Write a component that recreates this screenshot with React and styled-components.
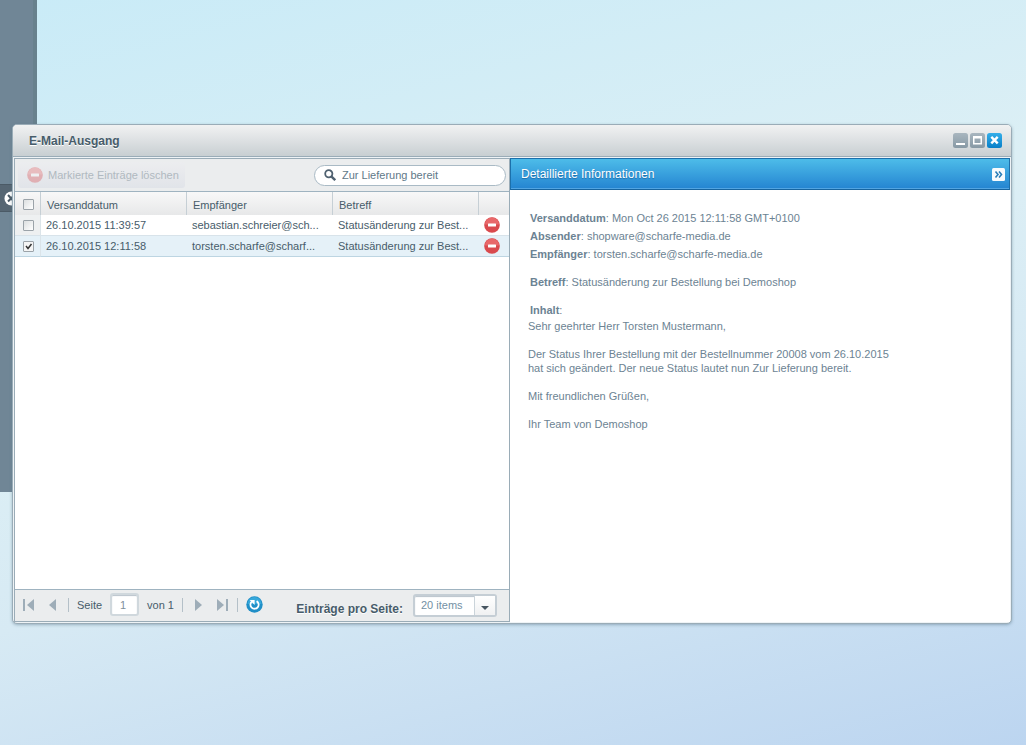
import React, { useState } from 'react'
import styled, { createGlobalStyle } from 'styled-components'

const GlobalStyle = createGlobalStyle`
  * {
    box-sizing: border-box;
  }

  body {
    margin: 0;
    color: #475c6a;
    font: 11px/14px 'Liberation Sans', Arial, sans-serif;
  }

  button, input, select {
    font: inherit;
    color: inherit;
  }
`

const Desktop = styled.main`
  position: relative;
  display: flex;
  height: 100vh;
  min-height: 480px;
  padding: 124px 14px 121px 12px;
  overflow: hidden;
  background: linear-gradient(165deg, #c9ebf7 0%, #dceff5 42%, #d7eaf4 62%, #bcd5f0 100%);
`

const BackWindow = styled.div`
  position: absolute;
  top: 0;
  left: 0;
  width: 37px;
  height: 492px;
  background: #708696;
  border-right: 4px solid #68818d;
`

const BackTab = styled.div`
  position: absolute;
  top: 184px;
  left: 0;
  width: 37px;
  height: 28px;
  padding: 6px 0 0 4px;
  background: #566673;
  border-top: 1px solid #4b5a66;
  border-bottom: 1px solid #4b5a66;
`

const Window = styled.section`
  position: relative;
  display: flex;
  flex: 1;
  flex-direction: column;
  min-width: 0;
  padding: 0 1px 1px;
  background: #eef3f6;
  border: 1px solid #9aacb7;
  border-radius: 5px;
  box-shadow: 0 1px 3px rgba(90, 120, 140, 0.5);
`

const TitleBar = styled.header`
  display: flex;
  flex: none;
  align-items: center;
  height: 32px;
  margin: 0 -1px 1px;
  padding: 0 9px 0 16px;
  background: linear-gradient(#f1f2f2, #dfe2e4 45%, #c8cfd2);
  border-bottom: 1px solid #9aacb7;
  border-radius: 4px 4px 0 0;
`

const Title = styled.h1`
  flex: 1;
  margin: 0;
  font-size: 12px;
  text-shadow: 0 1px 0 #fff;
`

const WindowTools = styled.div`
  display: flex;
  gap: 2px;
`

const IconButton = styled.button`
  display: flex;
  flex: none;
  padding: 0;
  background: none;
  border: 0;
`

const Panels = styled.div`
  display: grid;
  flex: 1;
  grid-template-columns: minmax(0, 124fr) minmax(0, 125fr);
  min-height: 0;
`

const ListPanel = styled.div`
  display: flex;
  flex-direction: column;
  min-width: 0;
  background: #fff;
  border: 1px solid #9aacb7;
`

const Toolbar = styled.div`
  display: flex;
  align-items: center;
  justify-content: space-between;
  height: 33px;
  padding: 0 3px;
  background: #ebedee;
  border-bottom: 1px solid #9fb3c0;
`

const DeleteButton = styled.button`
  display: flex;
  align-items: center;
  gap: 5px;
  height: 26px;
  padding: 0 6px 0 9px;
  color: #b0b9c0;
  background: linear-gradient(#ecedef, #e1e4e9);
  border: 0;
  border-radius: 3px;
`

const SearchBox = styled.label`
  display: flex;
  align-items: center;
  gap: 6px;
  width: 192px;
  height: 21px;
  padding: 0 9px;
  background: #fff;
  border: 1px solid #a9bac5;
  border-radius: 11px;
`

const SearchInput = styled.input`
  flex: 1;
  min-width: 0;
  padding: 0;
  color: #5f7888;
  background: none;
  border: 0;
  outline: 0;
`

const Table = styled.table`
  width: 100%;
  table-layout: fixed;
  border-collapse: separate;
  border-spacing: 0;
`

const CheckCol = styled.col`
  width: 26px;
`

const ActionCol = styled.col`
  width: 30px;
`

const HeadCell = styled.th`
  height: 23px;
  padding: 2px 6px 0;
  font-weight: normal;
  text-align: left;
  background: linear-gradient(#f8f8f8, #e7e8e9);
  border-right: ${({ $last }) => ($last ? '0' : '1px solid #c6cfd5')};
`

const Cell = styled.td`
  height: 21px;
  padding: 0 5px;
  white-space: nowrap;
  background: ${({ $selected }) => ($selected ? '#e5f1f8' : '#fff')};
  border-bottom: 1px solid ${({ $selected }) => ($selected ? '#bdd5e2' : '#d8e3ea')};
`

const CheckCell = styled(Cell)`
  padding: 0 0 0 8px;
  background: ${({ $selected }) => ($selected ? '#e5f1f8' : '#eef0f1')};
  border-right: 1px solid #dbe4e9;
`

const CheckHead = styled(HeadCell)`
  padding: 2px 0 0 8px;
`

const ActionCell = styled(Cell)`
  padding: 0 0 0 5px;
`

const Checkbox = styled.input`
  display: block;
  width: 11px;
  height: 11px;
  margin: 0;
  appearance: none;
  background: linear-gradient(135deg, #dcdfe0, #fff);
  border: 1px solid #9ba3a9;
  border-radius: 1px;

  &:checked {
    background: url("data:image/svg+xml,%3Csvg xmlns='http://www.w3.org/2000/svg' viewBox='0 0 9 9'%3E%3Cpath d='M2 4l2 2.5L7.5 2' fill='none' stroke='%23333' stroke-width='1.5'/%3E%3C/svg%3E") #f4f5f5;
  }
`

const Pager = styled.footer`
  display: flex;
  align-items: center;
  height: 32px;
  margin-top: auto;
  padding: 0 12px 0 7px;
  background: #ebedee;
  border-top: 1px solid #9fb3c0;
`

const PagerNav = styled.nav`
  display: flex;
  flex: 1;
  align-items: center;
  gap: 8px;
  padding-bottom: 2px;
`

const Arrows = styled.div`
  display: flex;
  gap: 12px;
`

const Separator = styled.span`
  width: 1px;
  height: 14px;
  background: #b4c0c8;
`

const PageField = styled.label`
  display: flex;
  align-items: center;
  gap: 8px;
`

const PageInput = styled.input`
  width: 29px;
  height: 23px;
  padding: 0 8px;
  color: #7e909c;
  background: #fff;
  border: 2px solid #d0d8dd;
  border-radius: 3px;
  box-shadow: inset 0 1px 1px #b8c3cb;
`

const SizeLabel = styled.label`
  margin: 7px 10px 0 0;
  font-size: 12px;
  font-weight: bold;
  white-space: nowrap;
  text-shadow: 0 1px 0 #fff;
`

const SelectBox = styled.div`
  position: relative;
  display: flex;
`

const Select = styled.select`
  width: 84px;
  height: 23px;
  padding: 0 24px 1px 6px;
  color: #7390a4;
  appearance: none;
  background: #fff;
  border: 2px solid #c5ced5;
  border-radius: 3px;
  box-shadow: inset 0 1px 1px #b8c3cb;
`

const SelectArrow = styled.span`
  position: absolute;
  top: 2px;
  right: 2px;
  bottom: 2px;
  display: flex;
  align-items: center;
  justify-content: center;
  width: 21px;
  padding-top: 5px;
  background: linear-gradient(#fff, #f0f1f2);
  border-left: 1px solid #cbd4da;
  pointer-events: none;
`

const DetailPanel = styled.aside`
  display: flex;
  flex-direction: column;
  min-width: 0;
  background: #fff;
`

const DetailHeader = styled.header`
  display: flex;
  align-items: center;
  justify-content: space-between;
  height: 32px;
  padding: 0 4px 0 10px;
  background: linear-gradient(#4dbce9, #2484d1);
  border: 1px solid #1c70ab;
  border-bottom-color: #18659f;
  box-shadow: inset 0 -1px 0 #52a5e2;
`

const DetailTitle = styled.h2`
  margin: 0;
  color: #fff;
  font-size: 12px;
  font-weight: normal;
  text-shadow: 0 1px 1px #1f6da8;
`

const Mail = styled.article`
  padding: 19px 18px;
  color: #6c8393;
`

const Meta = styled.dl`
  margin: 0;
  padding: 0 2px;
`

const MetaRow = styled.div`
  height: 18px;
  margin-top: ${({ $spaced }) => ($spaced ? '10px' : '0')};
  line-height: 18px;
`

const MetaName = styled.dt`
  display: inline;

  &::after {
    content: ': ';
    white-space: pre;
  }
`

const MetaValue = styled.dd`
  display: inline;
  margin: 0;
`

const Paragraph = styled.p`
  margin: 0 0 14px;
`

function MinusIcon({ faded }) {
  return (
    <svg width="16" height="16" viewBox="0 0 16 16" opacity={faded ? 0.35 : 1}>
      <circle cx="8" cy="8" r="7.8" fill="#d94a4e" />
      <path d="M1 7.5a7 7 0 0 1 14 0z" fill="#e8686a" />
      <rect x="4" y="6.5" width="8" height="3" rx="0.5" fill="#fff" />
    </svg>
  )
}

function SearchIcon() {
  return (
    <svg width="12" height="12" viewBox="0 0 12 12" fill="none" stroke="#4f6170">
      <circle cx="4.8" cy="4.8" r="3.6" strokeWidth="1.8" />
      <path d="M7.6 7.6l3.6 3.6" strokeWidth="2.4" />
    </svg>
  )
}

function ToolIcon({ type }) {
  return (
    <svg width="15" height="15" viewBox="0 0 15 15">
      <defs>
        <linearGradient id={`tool-${type}`} x2="0" y2="1">
          <stop stopColor={type === 'close' ? '#35aee9' : '#a9b6bf'} />
          <stop offset="1" stopColor={type === 'close' ? '#087fc8' : '#8799a5'} />
        </linearGradient>
      </defs>
      <rect width="15" height="15" rx="2.5" fill={`url(#tool-${type})`} />
      {type === 'minimize' && <path d="M3 11h9" stroke="#fff" strokeWidth="2" />}
      {type === 'maximize' && <path d="M3 3h9v8.5H3zM4.5 5.5v4.5h6V5.5z" fill="#fff" fillRule="evenodd" />}
      {type === 'close' && <path d="M4.3 3.8l6.4 6.6M10.7 3.8l-6.4 6.6" stroke="#fff" strokeWidth="2.4" />}
    </svg>
  )
}

function CollapseIcon() {
  return (
    <svg width="13" height="13" viewBox="0 0 13 13">
      <rect width="13" height="13" rx="1.5" fill="#f7fbfd" />
      <path d="M3.5 3.5L6 6.5l-2.5 3M7 3.5l2.5 3-2.5 3" fill="none" stroke="#2b7eb8" strokeWidth="1.6" />
    </svg>
  )
}

function PageArrow({ back, bar }) {
  return (
    <svg width="13" height="12" viewBox="0 0 13 12" fill="#9eadb8">
      <g transform={back ? 'translate(13 0) scale(-1 1)' : undefined}>
        <path d={bar ? 'M1 0v12l7-6z' : 'M4 0v12l7-6z'} />
        {bar && <rect x="10" width="2" height="12" />}
      </g>
    </svg>
  )
}

function RefreshIcon() {
  return (
    <svg width="17" height="17" viewBox="0 0 17 17">
      <circle cx="8.5" cy="8.5" r="8.2" fill="#208fc7" />
      <path d="M1.5 8a7 7 0 0 1 14 0z" fill="#36a8db" />
      <path d="M10.6 5.1a4.1 4.1 0 1 1-4.7.4" fill="none" stroke="#fff" strokeWidth="1.8" />
      <path d="M3.6 4h5v5z" fill="#fff" />
    </svg>
  )
}

const mails = [
  { id: 1, date: '26.10.2015 11:39:57', to: 'sebastian.schreier@scharfe-media.de', subject: 'Statusänderung zur Bestellung bei Demoshop' },
  { id: 2, date: '26.10.2015 12:11:58', to: 'torsten.scharfe@scharfe-media.de', subject: 'Statusänderung zur Bestellung bei Demoshop' }
]

const shorten = (text, length) => (text.length > length ? `${text.slice(0, length)}...` : text)

function MailTable() {
  const [selected, setSelected] = useState([2])

  const toggle = id =>
    setSelected(selected.includes(id) ? selected.filter(s => s !== id) : [...selected, id])

  return (
    <Table>
      <colgroup>
        <CheckCol />
        <col />
        <col />
        <col />
        <ActionCol />
      </colgroup>
      <thead>
        <tr>
          <CheckHead>
            <Checkbox
              type="checkbox"
              aria-label="Alle auswählen"
              checked={selected.length === mails.length}
              onChange={e => setSelected(e.target.checked ? mails.map(m => m.id) : [])}
            />
          </CheckHead>
          <HeadCell>Versanddatum</HeadCell>
          <HeadCell>Empfänger</HeadCell>
          <HeadCell>Betreff</HeadCell>
          <HeadCell $last />
        </tr>
      </thead>
      <tbody>
        {mails.map(mail => {
          const active = selected.includes(mail.id)
          return (
            <tr key={mail.id}>
              <CheckCell $selected={active}>
                <Checkbox type="checkbox" aria-label={mail.date} checked={active} onChange={() => toggle(mail.id)} />
              </CheckCell>
              <Cell $selected={active}>{mail.date}</Cell>
              <Cell $selected={active}>{shorten(mail.to, 22)}</Cell>
              <Cell $selected={active}>{shorten(mail.subject, 23)}</Cell>
              <ActionCell $selected={active}>
                <IconButton aria-label="Löschen"><MinusIcon /></IconButton>
              </ActionCell>
            </tr>
          )
        })}
      </tbody>
    </Table>
  )
}

function Paging() {
  return (
    <Pager>
      <PagerNav>
        <Arrows>
          <IconButton aria-label="Erste Seite"><PageArrow back bar /></IconButton>
          <IconButton aria-label="Vorherige Seite"><PageArrow back /></IconButton>
        </Arrows>
        <Separator />
        <PageField>
          Seite
          <PageInput defaultValue="1" />
        </PageField>
        <span>von 1</span>
        <Separator />
        <Arrows>
          <IconButton aria-label="Nächste Seite"><PageArrow /></IconButton>
          <IconButton aria-label="Letzte Seite"><PageArrow bar /></IconButton>
        </Arrows>
        <Separator />
        <IconButton aria-label="Aktualisieren"><RefreshIcon /></IconButton>
      </PagerNav>
      <SizeLabel htmlFor="page-size">Einträge pro Seite:</SizeLabel>
      <SelectBox>
        <Select id="page-size" defaultValue="20">
          <option value="20">20 items</option>
          <option value="40">40 items</option>
        </Select>
        <SelectArrow>
          <svg width="8" height="4" viewBox="0 0 8 4"><path d="M0 0h8L4 4z" fill="#475560" /></svg>
        </SelectArrow>
      </SelectBox>
    </Pager>
  )
}

function Details() {
  return (
    <DetailPanel>
      <DetailHeader>
        <DetailTitle>Detaillierte Informationen</DetailTitle>
        <IconButton aria-label="Einklappen"><CollapseIcon /></IconButton>
      </DetailHeader>
      <Mail>
        <Meta>
          <MetaRow>
            <MetaName><b>Versanddatum</b></MetaName>
            <MetaValue>Mon Oct 26 2015 12:11:58 GMT+0100</MetaValue>
          </MetaRow>
          <MetaRow>
            <MetaName><b>Absender</b></MetaName>
            <MetaValue>shopware@scharfe-media.de</MetaValue>
          </MetaRow>
          <MetaRow>
            <MetaName><b>Empfänger</b></MetaName>
            <MetaValue>torsten.scharfe@scharfe-media.de</MetaValue>
          </MetaRow>
          <MetaRow $spaced>
            <MetaName><b>Betreff</b></MetaName>
            <MetaValue>Statusänderung zur Bestellung bei Demoshop</MetaValue>
          </MetaRow>
          <MetaRow $spaced>
            <MetaName><b>Inhalt</b></MetaName>
          </MetaRow>
        </Meta>
        <Paragraph>Sehr geehrter Herr Torsten Mustermann,</Paragraph>
        <Paragraph>
          Der Status Ihrer Bestellung mit der Bestellnummer 20008 vom 26.10.2015<br />
          hat sich geändert. Der neue Status lautet nun Zur Lieferung bereit.
        </Paragraph>
        <Paragraph>Mit freundlichen Grüßen,</Paragraph>
        <Paragraph>Ihr Team von Demoshop</Paragraph>
      </Mail>
    </DetailPanel>
  )
}

export default function App() {
  return (
    <Desktop>
      <GlobalStyle />
      <BackWindow />
      <BackTab>
        <svg width="15" height="15" viewBox="0 0 15 15">
          <circle cx="7.5" cy="7.5" r="7" fill="#fff" />
          <path d="M4 4l6 6.5M10.5 4l-6.5 6.5" stroke="#4b5a66" strokeWidth="2" />
        </svg>
      </BackTab>
      <Window>
        <TitleBar>
          <Title>E-Mail-Ausgang</Title>
          <WindowTools>
            <IconButton aria-label="Minimieren"><ToolIcon type="minimize" /></IconButton>
            <IconButton aria-label="Maximieren"><ToolIcon type="maximize" /></IconButton>
            <IconButton aria-label="Schließen"><ToolIcon type="close" /></IconButton>
          </WindowTools>
        </TitleBar>
        <Panels>
          <ListPanel>
            <Toolbar>
              <DeleteButton disabled><MinusIcon faded />Markierte Einträge löschen</DeleteButton>
              <SearchBox>
                <SearchIcon />
                <SearchInput aria-label="Suche" defaultValue="Zur Lieferung bereit" />
              </SearchBox>
            </Toolbar>
            <MailTable />
            <Paging />
          </ListPanel>
          <Details />
        </Panels>
      </Window>
    </Desktop>
  )
}
